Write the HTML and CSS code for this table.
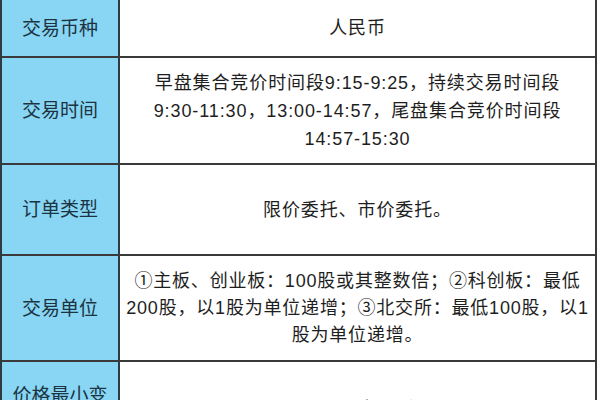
FILE: index.html
```html
<!DOCTYPE html>
<html lang="zh-CN">
<head>
<meta charset="utf-8">
<link rel="stylesheet" href="styles.css">
</head>
<body>
<div class="table">
  <div class="row r1">
    <div class="label">交易币种</div>
    <div class="value">人民币</div>
  </div>
  <div class="row r2">
    <div class="label">交易时间</div>
    <div class="value">早盘集合竞价时间段9:15-9:25，持续交易时间段<br>9:30-11:30，13:00-14:57，尾盘集合竞价时间段<br>14:57-15:30</div>
  </div>
  <div class="row r3">
    <div class="label">订单类型</div>
    <div class="value">限价委托、市价委托。</div>
  </div>
  <div class="row r4">
    <div class="label">交易单位</div>
    <div class="value tight">①主板、创业板：100股或其整数倍；②科创板：最低<br>200股，以1股为单位递增；③北交所：最低100股，以1<br>股为单位递增。</div>
  </div>
  <div class="row r5">
    <div class="label">价格最小变<br>动单位</div>
    <div class="value">0.01元人民币</div>
  </div>
</div>
</body>
</html>
```
FILE: styles.css
```css
html, body {
  margin: 0;
  padding: 0;
  background: #ffffff;
}
body {
  width: 600px;
  height: 400px;
  overflow: hidden;
  font-family: "Liberation Sans", "Noto Sans CJK SC", sans-serif;
}
.table {
  width: 597px;
  border-left: 2px solid #2f3a40;
  border-right: 2px solid #3a3a3a;
  box-sizing: border-box;
}
.row {
  display: grid;
  grid-template-columns: 118px 1fr;
  border-bottom: 2px solid #3a3a3a;
}
.r1 { height: 56px; }
.r2 { height: 105px; }
.r3 { height: 89px; }
.r4 { height: 104px; }
.r5 { height: 94px; }
.label {
  background: #88d6f4;
  border-right: 2px solid #2c3a42;
  display: flex;
  align-items: center;
  justify-content: center;
  text-align: center;
  font-size: 19px;
  line-height: 27px;
  color: #1c3442;
}
.value {
  display: flex;
  align-items: center;
  justify-content: center;
  text-align: center;
  font-size: 18px;
  line-height: 28px;
  color: #1e1e1e;
  padding: 0 4px;
  letter-spacing: 0.9px;
}
.value.tight {
  line-height: 27px;
  letter-spacing: 0.8px;
}
```
